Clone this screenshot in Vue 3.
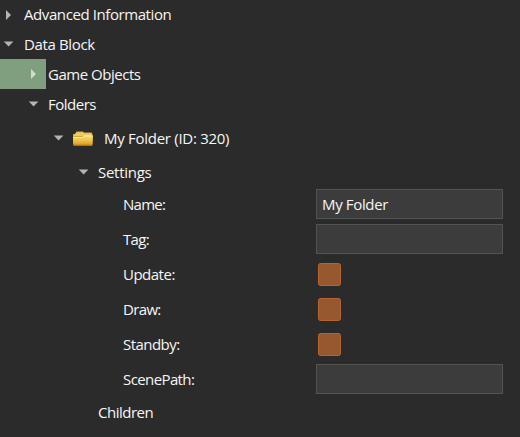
<script setup>
const nodes = [
  { label: 'Advanced Information', level: 0, open: false, track: -0.41 },
  { label: 'Data Block', level: 0, open: true, track: -0.36 },
  { label: 'Game Objects', level: 1, open: false, active: true, track: -0.47 },
  { label: 'Folders', level: 1, open: true, track: -0.5 },
  { label: 'My Folder (ID: 320)', level: 2, open: true, folder: true, track: -0.28 },
  { label: 'Settings', level: 3, open: true, track: -0.28 },
]
const fields = [
  { label: 'Name:', type: 'text', value: 'My Folder', track: -0.75 },
  { label: 'Tag:', type: 'text', value: '', track: -0.7 },
  { label: 'Update:', type: 'check', track: -0.5 },
  { label: 'Draw:', type: 'check', track: -0.65 },
  { label: 'Standby:', type: 'check', track: -0.55 },
  { label: 'ScenePath:', type: 'text', value: '', track: -0.6 },
]
</script>

<template>
  <main class="tree">
    <div v-for="n in nodes" :key="n.label" class="row" :class="['level-' + n.level, { tall: n.folder }]">
      <span class="gutter" :class="{ active: n.active }">
        <svg class="arrow" width="10" height="10" viewBox="0 0 10 10">
          <path v-if="n.open" d="M0.8 2.4H10.4L5.6 7.4Z" />
          <path v-else d="M3 0L8 5L3 10Z" />
        </svg>
      </span>
      <svg v-if="n.folder" class="folder" width="20" height="15" viewBox="0 0 20 15">
        <defs>
          <linearGradient id="front" x1="0" y1="0" x2="0" y2="1">
            <stop offset="0" stop-color="#f8dc78" />
            <stop offset=".5" stop-color="#eec24a" />
            <stop offset="1" stop-color="#d9980e" />
          </linearGradient>
        </defs>
        <path d="M0 3H2.5L3.5 0.5H10L11 1.5H18.5L19.5 3V13H0Z" fill="#d5a93a" />
        <path d="M1 4L3.5 1.3H9.8L11 2.3H18.5V5H1Z" fill="#ecca66" />
        <path d="M0 6H9.5L11 4.5H20L19.3 14.5H0.4Z" fill="url(#front)" />
        <path d="M0.5 6.5H9.7L11.3 5H19.5" fill="none" stroke="#fbe896" />
        <path d="M0.5 14H19.3" stroke="#c48a12" />
      </svg>
      <span class="label" :style="{ letterSpacing: n.track + 'px' }">{{ n.label }}</span>
    </div>
    <label v-for="f in fields" :key="f.label" class="field">
      <span class="name" :style="{ letterSpacing: f.track + 'px' }">{{ f.label }}</span>
      <input v-if="f.type === 'text'" class="input" type="text" :value="f.value" />
      <input v-else class="check" type="checkbox" />
    </label>
    <div class="row children"><span class="label">Children</span></div>
  </main>
</template>

<style>
body { margin: 0; background: #2b2b2b; }
</style>

<style scoped>
.tree {
  box-sizing: border-box;
  height: 437px;
  overflow: hidden;
  background: #2b2b2b;
  color: #f6f6f6;
  font: 15px/20px "Open Sans", "Noto Sans", sans-serif;
}
.row { display: flex; align-items: center; height: 30px; white-space: pre; }
.row:first-child { height: 29px; }
.tall { height: 38px; }
.gutter {
  box-sizing: border-box;
  display: flex;
  align-items: center;
  justify-content: flex-end;
  height: 30px;
  padding-right: 8px;
  flex: none;
}
.level-0 .gutter { width: 21px; }
.level-1 .gutter { width: 46px; }
.level-2 .gutter { width: 71px; }
.level-3 .gutter { width: 96px; }
.active { background: #7f9f7f; }
.arrow { fill: #b4b4b4; overflow: visible; }
.active .arrow { fill: #d0dcd0; }
.row:first-child .label { padding-bottom: 1px; }
.label { margin-left: 2px; }
.level-0 .label { margin-left: 3px; }
.folder { flex: none; margin: 0 10px 0 2px; }
.tall .label { margin-left: 1px; }
.field {
  display: grid;
  grid-template-columns: 193px 187px;
  align-items: start;
  height: 35px;
  padding: 2px 0 0 123px;
  box-sizing: border-box;
}
.name { padding-top: 5px; }
.input {
  box-sizing: border-box;
  width: 187px;
  height: 30px;
  padding: 0 5px;
  margin: 0;
  border: 1px solid #535353;
  border-radius: 0;
  background: #3c3c3c;
  color: #f6f6f6;
  font: inherit;
  letter-spacing: -0.35px;
  outline: none;
}
.check {
  appearance: none;
  box-sizing: border-box;
  width: 22.5px;
  height: 22.5px;
  margin: 4px 0 0 2px;
  border: 1px solid #b8642d;
  border-radius: 2.5px;
  background: #96582f;
}
.children { padding-left: 96px; letter-spacing: -0.5px; }
</style>
